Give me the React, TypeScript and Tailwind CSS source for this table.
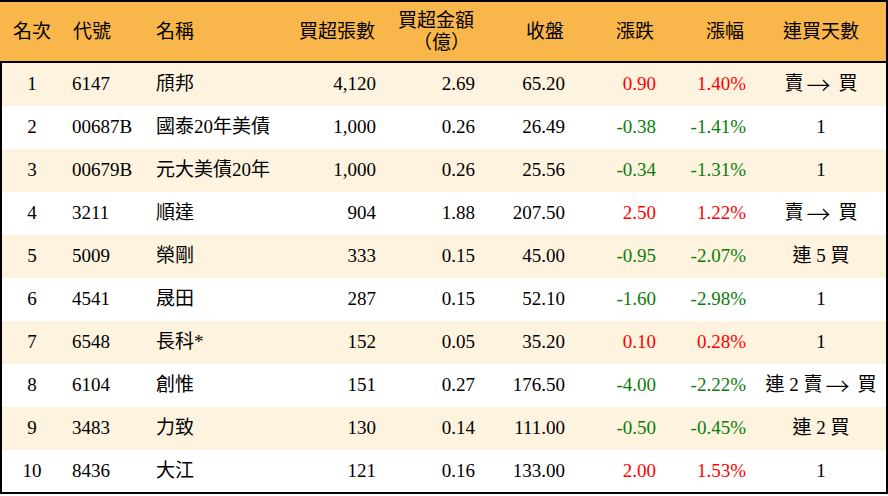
import React from "react";

type Row = {
  rank: number;
  code: string;
  name: string;
  lots: string;
  amount: string;
  close: string;
  change: string;
  pct: string;
  streak: string;
};

const rows: Row[] = [
  { rank: 1, code: "6147", name: "頎邦", lots: "4,120", amount: "2.69", close: "65.20", change: "0.90", pct: "1.40%", streak: "賣→買" },
  { rank: 2, code: "00687B", name: "國泰20年美債", lots: "1,000", amount: "0.26", close: "26.49", change: "-0.38", pct: "-1.41%", streak: "1" },
  { rank: 3, code: "00679B", name: "元大美債20年", lots: "1,000", amount: "0.26", close: "25.56", change: "-0.34", pct: "-1.31%", streak: "1" },
  { rank: 4, code: "3211", name: "順達", lots: "904", amount: "1.88", close: "207.50", change: "2.50", pct: "1.22%", streak: "賣→買" },
  { rank: 5, code: "5009", name: "榮剛", lots: "333", amount: "0.15", close: "45.00", change: "-0.95", pct: "-2.07%", streak: "連 5 買" },
  { rank: 6, code: "4541", name: "晟田", lots: "287", amount: "0.15", close: "52.10", change: "-1.60", pct: "-2.98%", streak: "1" },
  { rank: 7, code: "6548", name: "長科*", lots: "152", amount: "0.05", close: "35.20", change: "0.10", pct: "0.28%", streak: "1" },
  { rank: 8, code: "6104", name: "創惟", lots: "151", amount: "0.27", close: "176.50", change: "-4.00", pct: "-2.22%", streak: "連 2 賣→買" },
  { rank: 9, code: "3483", name: "力致", lots: "130", amount: "0.14", close: "111.00", change: "-0.50", pct: "-0.45%", streak: "連 2 買" },
  { rank: 10, code: "8436", name: "大江", lots: "121", amount: "0.16", close: "133.00", change: "2.00", pct: "1.53%", streak: "1" },
];

const font = { fontFamily: '"Liberation Serif", "Noto Sans CJK TC", serif' };

function Streak({ text }: { text: string }) {
  const parts = text.split("→");
  if (parts.length === 1) return <>{text}</>;
  return (
    <span className="inline-flex items-center">
      <span>{parts[0]}</span>
      <span
        className="text-[24px] font-light leading-none ml-[3px] mr-[8px] -translate-y-[1px]"
        style={{ fontFamily: '"Noto Sans CJK TC", sans-serif' }}
      >
        →
      </span>
      <span>{parts[1]}</span>
    </span>
  );
}

export default function App() {
  return (
    <div className="w-[888px] h-[496px] bg-white text-[19px] text-black overflow-hidden" style={font}>
      {/* header */}
      <div className="flex h-[63px] items-center bg-[#f9b64b] border-t-2 border-r-2 border-b-2 border-black leading-[22px]">
        <div className="w-[64px] text-center">名次</div>
        <div className="w-[82px] pl-[9px]">代號</div>
        <div className="w-[150px] pl-[10px]">名稱</div>
        <div className="w-[80px] text-right pr-[1px]">買超張數</div>
        <div className="w-[99px] text-right pr-[1px]">
          買超金額
          <br />
          <span className="pr-[4px]">（億）</span>
        </div>
        <div className="w-[90px] text-right pr-[1px]">收盤</div>
        <div className="w-[91px] text-right pr-[2px]">漲跌</div>
        <div className="w-[100px] text-right pr-[12px]">漲幅</div>
        <div className="w-[130px] text-center">連買天數</div>
      </div>

      {/* body */}
      <div className="border-l-2 border-r-2 border-b-2 border-black">
        {rows.map((r, i) => {
          const up = !r.change.startsWith("-");
          const color = up ? "text-[#ff0000]" : "text-[#0a7d0a]";
          return (
            <div
              key={r.rank}
              className={`flex items-center ${i === 9 ? "h-[42px]" : "h-[43px]"} ${
                i % 2 === 0 ? "bg-[#fef3df]" : "bg-white"
              }`}
            >
              <div className="w-[60px] text-center">{r.rank}</div>
              <div className="w-[84px] pl-[10px]">{r.code}</div>
              <div className="w-[150px] pl-[10px]">{r.name}</div>
              <div className="w-[80px] text-right">{r.lots}</div>
              <div className="w-[99px] text-right">{r.amount}</div>
              <div className="w-[90px] text-right">{r.close}</div>
              <div className={`w-[91px] text-right ${color}`}>{r.change}</div>
              <div className={`w-[100px] text-right pr-[10px] ${color}`}>{r.pct}</div>
              <div className="w-[130px] text-center">
                <Streak text={r.streak} />
              </div>
            </div>
          );
        })}
      </div>
    </div>
  );
}
